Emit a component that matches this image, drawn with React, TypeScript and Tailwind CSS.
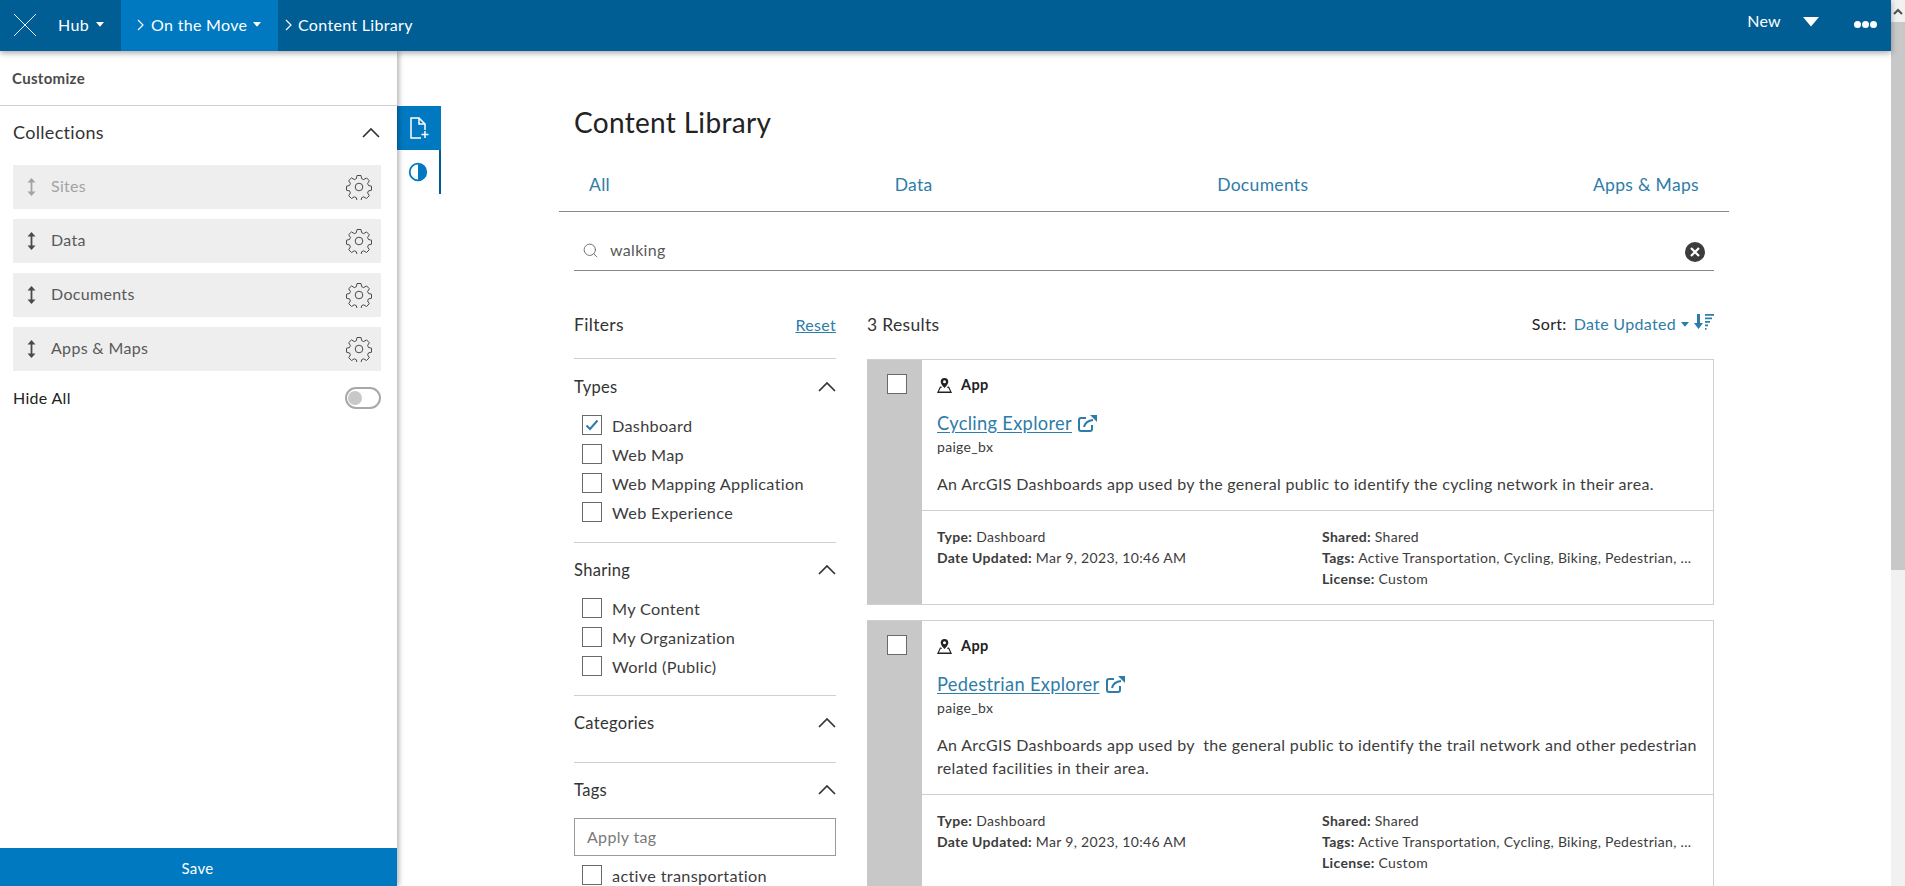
import { Search } from 'lucide-react'

const Gear = () => (
  <svg width="26" height="26" viewBox="0 0 26 26" fill="none" stroke="#4a4a4a" strokeWidth="1">
    <path d="M11 1.500h4l.7 3.200 2 .9 2.800-1.700 2.800 2.800-1.700 2.800.9 2 3 .7v4l-3 .7-.9 2 1.700 2.800-2.800 2.800-2.800-1.700-2 .9-.7 3h-4l-.7-3-2-.9-2.800 1.700-2.800-2.800 1.700-2.800-.9-2-3-.7v-4l3-.7.9-2-1.700-2.800 2.800-2.800 2.800 1.700 2-.9z" />
    <circle cx="13" cy="13" r="3.800" />
  </svg>
)

const UpDown = ({ color }: { color: string }) => (
  <svg width="9" height="18" viewBox="0 0 9 18" fill={color}>
    <path d="M4.500 0l4 4.500H5.400v9h3.100l-4 4.500-4-4.500h3.100v-9H.5z" />
  </svg>
)

const Caret = ({ size = 8 }: { size?: number }) => (
  <svg width={size} height={size * 0.6} viewBox="0 0 10 6" fill="currentColor">
    <path d="M0 0h10L5 6z" />
  </svg>
)

const Crumb = () => (
  <svg width="7" height="12" viewBox="0 0 7 12" fill="none" stroke="currentColor" strokeWidth="1.200">
    <path d="M1 1l5 5-5 5" />
  </svg>
)

const Chevron = () => (
  <svg width="18" height="10" viewBox="0 0 18 10" fill="none" stroke="#333" strokeWidth="1.700">
    <path d="M1 9l8-8 8 8" />
  </svg>
)

const Box = ({ checked }: { checked?: boolean }) => (
  <span className="w-5 h-5 shrink-0 border border-[#6a6a6a] bg-white flex items-center justify-center">
    {checked && (
      <svg width="14" height="14" viewBox="0 0 14 14" fill="none" stroke="#2e7ca8" strokeWidth="2">
        <path d="M1.500 7.500l3.500 3.500 7.500-8.500" />
      </svg>
    )}
  </span>
)

const Check = ({ label, checked }: { label: string; checked?: boolean }) => (
  <div className="flex items-center gap-[10px] h-[29px] pl-2 text-[16.250px] text-[#3c3c3c]">
    <Box checked={checked} />
    <span className="relative top-[2px]">{label}</span>
  </div>
)

const FilterHead = ({ title }: { title: string }) => (
  <div className="flex items-center justify-between h-6 text-[16.500px] text-[#333]">
    {title}
    <Chevron />
  </div>
)

const Row = ({ label, muted }: { label: string; muted?: boolean }) => (
  <div className="h-11 bg-[#eeeeee] flex items-center pl-[14px] pr-[9px]">
    <UpDown color={muted ? '#a3a3a3' : '#4a4a4a'} />
    <span className={`ml-[15px] flex-1 pb-[2px] text-[16px] ${muted ? 'text-[#a3a3a3]' : 'text-[#595959]'}`}>{label}</span>
    <Gear />
  </div>
)

const Meta = ({ k, v }: { k: string; v: string }) => (
  <div className="h-[21px] leading-[21px] whitespace-nowrap">
    <span className="font-bold">{k}:</span> {v}
  </div>
)

const Card = ({ title, desc }: { title: string; desc: string }) => (
  <div className="flex border border-[#cfcfcf] border-l-0 mb-[15px]">
    <div className="w-[55px] shrink-0 bg-[#c8c8c8] pl-5 pt-[14px]">
      <Box />
    </div>
    <div className="flex-1 min-w-0">
      <div className="pl-[15px] pr-[12px] pt-[15px] pb-[15px]">
        <div className="flex items-center gap-[9px] h-5 text-[14.500px] font-bold text-[#222]">
          <svg width="15" height="15" viewBox="0 0 15 15" fill="#222">
            <path fillRule="evenodd" d="M7.500 0a3.800 3.800 0 0 1 3.800 3.800c0 1.900-2 4.400-3.800 6.200C5.700 8.200 3.700 5.700 3.700 3.800A3.800 3.800 0 0 1 7.500 0zm0 2.300a1.500 1.500 0 1 0 0 3 1.500 1.500 0 0 0 0-3z" />
            <path d="M3 8.500h1.200l1 1.200H3.700L1.900 13.500h11.200l-1.800-3.800H9.800l1-1.200H12l3 6.500H0z" />
          </svg>
          App
        </div>
        <div className="mt-[16px] flex items-center gap-[5px] h-[25px] text-[18.250px] text-[#2e7ca8]">
          <a className="underline underline-offset-2">{title}</a>
          <svg width="20" height="20" viewBox="0 0 20 20" fill="none" stroke="#2e7ca8" strokeWidth="2">
            <path d="M9 4H4a2 2 0 0 0-2 2v9a2 2 0 0 0 2 2h9a2 2 0 0 0 2-2v-4" />
            <path d="M7 13c1-4 4-6.500 9-7" />
            <path fill="#2e7ca8" stroke="none" d="M13 1h7v7z" />
          </svg>
        </div>
        <div className="text-[14px] leading-5 text-[#3c3c3c] mt-[1px]">paige_bx</div>
        <p className="mt-[15px] text-[16px] leading-[23px] text-[#3c3c3c] whitespace-pre-wrap">{desc}</p>
      </div>
      <div className="border-t border-[#cfcfcf] pl-[15px] pr-[15px] pt-[15px] pb-[15px] flex text-[14px] text-[#3c3c3c]">
        <div className="w-[385px]">
          <Meta k="Type" v="Dashboard" />
          <Meta k="Date Updated" v="Mar 9, 2023, 10:46 AM" />
        </div>
        <div className="flex-1 min-w-0">
          <Meta k="Shared" v="Shared" />
          <Meta k="Tags" v="Active Transportation, Cycling, Biking, Pedestrian, ..." />
          <Meta k="License" v="Custom" />
        </div>
      </div>
    </div>
  </div>
)

export default function App() {
  return (
    <div className="h-[886px] overflow-hidden flex bg-white tracking-[0.02em] font-['Lato','Noto_Sans',sans-serif]">
      <div className="flex-1 min-w-0 flex flex-col">
        {/* top bar */}
        <header className="relative z-20 h-[51px] shrink-0 bg-[#005e95] text-white flex items-center shadow-[0_2px_6px_rgba(0,0,0,0.35)] text-[16px] pr-[14px]">
          <div className="w-[121px] h-full flex items-center pb-[2px]">
            <svg width="24" height="24" viewBox="0 0 24 24" className="ml-[13px]" stroke="#e6eef4" strokeWidth="1" fill="none">
              <path d="M1 1l22 22M23 1L1 23" />
            </svg>
            <span className="ml-[21px]">Hub</span>
            <span className="ml-[7px]"><Caret /></span>
          </div>
          <div className="w-[157px] h-full bg-[#0079c1] flex items-center pl-4 pb-[2px]">
            <Crumb />
            <span className="ml-[7px]">On the Move</span>
            <span className="ml-[6px]"><Caret /></span>
          </div>
          <div className="flex items-center pl-[7px] pb-[2px]">
            <Crumb />
            <span className="ml-[6px]">Content Library</span>
          </div>
          <div className="ml-auto flex items-center pb-[2px]">
            <span className="mb-[7px]">New</span>
            <span className="ml-[22px] mb-[5px]"><Caret size={16} /></span>
            <span className="ml-[35px] flex gap-[1px]">
              <i className="w-[7px] h-[7px] rounded-full bg-white" />
              <i className="w-[7px] h-[7px] rounded-full bg-white" />
              <i className="w-[7px] h-[7px] rounded-full bg-white" />
            </span>
          </div>
        </header>

        <div className="flex-1 flex min-h-0">
          {/* customize panel */}
          <aside className="relative z-10 w-[397px] shrink-0 flex flex-col bg-white shadow-[2px_0_5px_rgba(0,0,0,0.3)]">
            <div className="h-[55px] shrink-0 border-b border-[#cfcfcf] flex items-center pl-3 text-[15px] font-bold text-[#4a4a4a]">
              Customize
            </div>
            <div className="flex items-center justify-between pl-[13px] pr-[17px] h-[59px] pb-[6px] text-[18px] text-[#333]">
              Collections
              <Chevron />
            </div>
            <div className="flex flex-col gap-[10px] pl-[13px] pr-[16px]">
              <Row label="Sites" muted />
              <Row label="Data" />
              <Row label="Documents" />
              <Row label="Apps & Maps" />
            </div>
            <div className="flex items-center justify-between pl-[13px] pr-[16px] mt-[15px] text-[16px] text-[#222]">
              Hide All
              <span className="w-9 h-[22px] rounded-full border-2 border-[#a8a8a8] flex items-center pl-[1px]">
                <i className="w-[14px] h-[14px] rounded-full bg-[#c8c8c8]" />
              </span>
            </div>
            <div className="mt-auto h-[38px] bg-[#0079c1] text-white text-[15px] pt-[3px] pr-[2px] flex items-center justify-center">Save</div>
          </aside>

          {/* panel tabs */}
          <div className="w-[44px] shrink-0 pt-[55px]">
            <div className="h-11 bg-[#0079c1] flex items-center justify-center">
              <svg width="22" height="24" viewBox="0 0 22 24" fill="none" stroke="#fff" strokeWidth="1.500">
                <path d="M13 22H3V2h8l6 6v6" />
                <path d="M11 2v6h6" />
                <path d="M17 15v7M13.500 18.500h7" />
              </svg>
            </div>
            <div className="h-11 bg-white border-r-2 border-[#005e95] flex items-center justify-center">
              <svg width="20" height="20" viewBox="0 0 20 20">
                <circle cx="10" cy="10" r="8.300" fill="none" stroke="#0079c1" strokeWidth="1.800" />
                <path d="M10 2a8 8 0 0 1 0 16z" fill="#0079c1" />
              </svg>
            </div>
          </div>

          {/* main */}
          <main className="flex-1 min-w-0 pl-[118px] pr-[162px] pt-[51px]">
            <h1 className="pl-[15px] text-[28px] leading-[40px] text-[#222]">Content Library</h1>
            <nav className="mt-[23px] h-[47px] border-b border-[#8a8a8a] flex justify-between pl-[30px] pr-[30px] pt-[7px] text-[17.500px] text-[#2e7ca8]">
              <a>All</a>
              <a>Data</a>
              <a>Documents</a>
              <a>Apps &amp; Maps</a>
            </nav>
            <div className="ml-[15px] mr-[15px]">
              <div className="h-[59px] border-b border-[#8a8a8a] flex items-center pl-2 pt-[21px] pr-[9px] text-[16px] text-[#595959]">
                <Search size={17} strokeWidth={1.300} className="text-[#6a6a6a] -mt-[3px]" />
                <span className="ml-[11px] -mt-[3px] flex-1">walking</span>
                <span className="w-5 h-5 rounded-full bg-[#3c3c3c] text-white flex items-center justify-center">
                  <svg width="10" height="10" viewBox="0 0 10 10" stroke="#fff" strokeWidth="2.200"><path d="M1 1l8 8M9 1L1 9" /></svg>
                </span>
              </div>
              <div className="mt-[38px] flex gap-[31px]">
                {/* filters */}
                <div className="w-[262px] shrink-0">
                  <div className="h-[50px] flex justify-between border-b border-[#cfcfcf] pt-[3px] text-[17.500px] text-[#333]">
                    <span>Filters</span>
                    <a className="text-[16px] text-[#2e7ca8] underline pt-[1px]">Reset</a>
                  </div>
                  <div className="pt-4 border-b border-[#cfcfcf] h-[184px]">
                    <FilterHead title="Types" />
                    <div className="mt-[11px]">
                      <Check label="Dashboard" checked />
                      <Check label="Web Map" />
                      <Check label="Web Mapping Application" />
                      <Check label="Web Experience" />
                    </div>
                  </div>
                  <div className="pt-[15px] border-b border-[#cfcfcf] h-[153px]">
                    <FilterHead title="Sharing" />
                    <div className="mt-[11px]">
                      <Check label="My Content" />
                      <Check label="My Organization" />
                      <Check label="World (Public)" />
                    </div>
                  </div>
                  <div className="pt-[15px] border-b border-[#cfcfcf] h-[67px]">
                    <FilterHead title="Categories" />
                  </div>
                  <div className="pt-[15px]">
                    <FilterHead title="Tags" />
                    <div className="mt-[16px] h-[38px] border border-[#9a9a9a] flex items-center pl-3 text-[16px] text-[#7a7a7a]">
                      Apply tag
                    </div>
                    <div className="mt-[4px]">
                      <Check label="active transportation" />
                    </div>
                  </div>
                </div>
                {/* results */}
                <div className="flex-1 min-w-0">
                  <div className="h-[50px] flex justify-between pt-[3px] text-[17.500px] text-[#333]">
                    <span>3 Results</span>
                    <div className="flex items-start text-[16px]">
                      <span className="text-[#222]">Sort:</span>
                      <span className="ml-[7px] text-[#2e7ca8]">Date Updated</span>
                      <span className="ml-[5px] mt-[10px] text-[#2e7ca8]"><Caret /></span>
                      <svg width="20" height="18" viewBox="0 0 20 18" className="ml-[5px] mt-[1px]" fill="#2e7ca8">
                        <path d="M3 1h3v9h3l-4.500 6L0 10h3z" />
                        <path d="M11 1h9v1.800h-9zM11 4.500h7v1.800h-7zM11 8h5v1.800h-5zM11 11.500h3v1.800h-3zM11 15h1.500v1.800H11z" />
                      </svg>
                    </div>
                  </div>
                  <Card
                    title="Cycling Explorer"
                    desc="An ArcGIS Dashboards app used by the general public to identify the cycling network in their area."
                  />
                  <Card
                    title="Pedestrian Explorer"
                    desc="An ArcGIS Dashboards app used by  the general public to identify the trail network and other pedestrian related facilities in their area."
                  />
                </div>
              </div>
            </div>
          </main>
        </div>
      </div>

      {/* page scrollbar */}
      <div className="w-[14px] shrink-0 bg-[#f1f1f1] flex flex-col">
        <div className="h-[22px] flex items-center justify-center">
          <svg width="10" height="7" viewBox="0 0 10 7" fill="none" stroke="#505050" strokeWidth="2">
            <path d="M1 6l4-4 4 4" />
          </svg>
        </div>
        <div className="h-[548px] bg-[#c8c8c8]" />
      </div>
    </div>
  )
}
